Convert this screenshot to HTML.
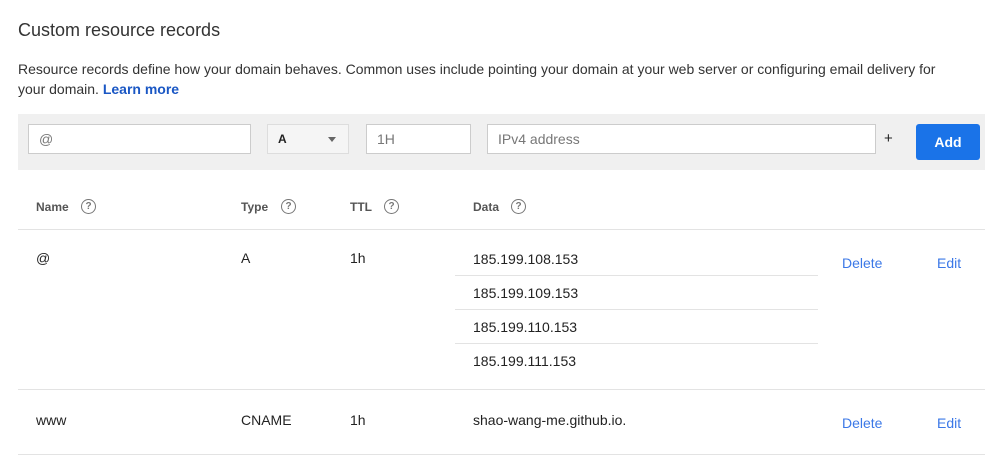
<!DOCTYPE html>
<html><head><style>
body{margin:0;width:1007px;height:472px;background:#fff;font-family:"Liberation Sans",Arial,sans-serif;color:#202124;position:relative;overflow:hidden}
.a{position:absolute;white-space:nowrap}
.in{position:absolute;background:#fff;border:1px solid #ccc;box-sizing:border-box;height:30px;top:124px;font-size:14px;color:#777;line-height:28px;padding-left:10px}
.h{font-size:12px;font-weight:bold;color:#555;top:200px}
.q{position:absolute;width:13px;height:13px;border:1.5px solid #777;border-radius:50%;top:199px;font-size:10px;font-weight:bold;color:#777;text-align:center;line-height:13px}
.t{font-size:14px;color:#222}
.l{font-size:14px;color:#3b78e7}
.hr{position:absolute;height:1px;background:#e3e3e3}
</style></head><body>
<div class="a" style="left:18px;top:20px;font-size:18px;color:#333">Custom resource records</div>
<div class="a" style="left:18px;top:59px;font-size:14px;color:#333;line-height:20px">Resource records define how your domain behaves. Common uses include pointing your domain at your web server or configuring email delivery for<br>your domain. <b style="color:#1a57c4">Learn more</b></div>
<div class="a" style="left:18px;top:114px;width:967px;height:56px;background:#f0f0f0"></div>
<div class="in" style="left:28px;width:223px">@</div>
<div class="in" style="left:267px;width:82px;background:#f5f5f5;border-color:#ddd;color:#222;font-size:12px;font-weight:bold">A<span style="position:absolute;left:60px;top:12px;border:4px solid transparent;border-top:5px solid #666;border-bottom:0"></span></div>
<div class="in" style="left:366px;width:105px">1H</div>
<div class="in" style="left:487px;width:389px">IPv4 address</div>
<div class="a" style="left:884px;top:130px;font-size:15px;color:#222">+</div>
<div class="a" style="left:916px;top:124px;width:64px;height:36px;background:#1a73e8;border-radius:3px;color:#fff;font-weight:bold;font-size:14px;text-align:center;line-height:36px">Add</div>
<div class="a h" style="left:36px">Name</div><div class="q" style="left:81px">?</div>
<div class="a h" style="left:241px">Type</div><div class="q" style="left:281px">?</div>
<div class="a h" style="left:350px">TTL</div><div class="q" style="left:384px">?</div>
<div class="a h" style="left:473px">Data</div><div class="q" style="left:511px">?</div>
<div class="hr" style="left:18px;top:229px;width:967px"></div>
<div class="a t" style="left:36px;top:250px">@</div>
<div class="a t" style="left:241px;top:250px">A</div>
<div class="a t" style="left:350px;top:250px">1h</div>
<div class="a t" style="left:473px;top:251px">185.199.108.153</div>
<div class="hr" style="left:455px;top:275px;width:363px"></div>
<div class="a t" style="left:473px;top:285px">185.199.109.153</div>
<div class="hr" style="left:455px;top:309px;width:363px"></div>
<div class="a t" style="left:473px;top:319px">185.199.110.153</div>
<div class="hr" style="left:455px;top:343px;width:363px"></div>
<div class="a t" style="left:473px;top:353px">185.199.111.153</div>
<div class="a l" style="left:842px;top:255px">Delete</div>
<div class="a l" style="left:937px;top:255px">Edit</div>
<div class="hr" style="left:18px;top:389px;width:967px"></div>
<div class="a t" style="left:36px;top:412px">www</div>
<div class="a t" style="left:241px;top:412px">CNAME</div>
<div class="a t" style="left:350px;top:412px">1h</div>
<div class="a t" style="left:473px;top:412px">shao-wang-me.github.io.</div>
<div class="a l" style="left:842px;top:415px">Delete</div>
<div class="a l" style="left:937px;top:415px">Edit</div>
<div class="hr" style="left:18px;top:454px;width:967px"></div>
</body></html>
